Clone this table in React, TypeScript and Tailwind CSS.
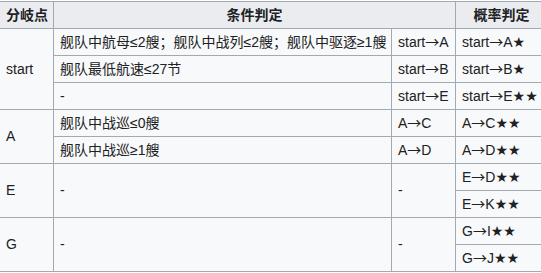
import React from 'react';

const cell = 'border border-[#a2a9b1] px-[6px] py-0 h-[27px] leading-[19px] text-left align-middle whitespace-nowrap';
const head = 'border border-[#a2a9b1] px-[6px] py-0 h-[27px] leading-[19px] bg-[#eaecf0] font-bold text-center whitespace-nowrap';

// arrow and star glyphs come from different fonts in the original page
function Arrow() {
  return <span style={{ fontFamily: '"Noto Sans CJK SC", sans-serif' }}>→</span>;
}

function Route({ from, to, stars = 0 }: { from: string; to: string; stars?: number }) {
  return (
    <>
      {from}
      <Arrow />
      {to}
      {stars > 0 && <span style={{ fontFamily: '"DejaVu Sans", sans-serif' }}>{'★'.repeat(stars)}</span>}
    </>
  );
}

export default function App() {
  return (
    <div className="overflow-hidden w-[541px] h-[273px] bg-white">
      <table
        className="border-collapse table-fixed w-[548px] bg-[#f8f9fa] text-[#202122] text-[14px] ml-[-1px] mt-[1px]"
        style={{ fontFamily: '"Liberation Sans", Arial, "Noto Sans CJK SC", "DejaVu Sans", sans-serif' }}
      >
        <colgroup>
          <col className="w-[54px]" />
          <col className="w-[338px]" />
          <col className="w-[64px]" />
          <col className="w-[92px]" />
        </colgroup>
        <thead>
          <tr>
            <th className={head}>分岐点</th>
            <th className={head} colSpan={2}>条件判定</th>
            <th className={head}>概率判定</th>
          </tr>
        </thead>
        <tbody>
          <tr>
            <td className={cell} rowSpan={3}>start</td>
            <td className={cell}>舰队中航母≤2艘；舰队中战列≤2艘；舰队中驱逐≥1艘</td>
            <td className={cell}><Route from="start" to="A" /></td>
            <td className={cell}><Route from="start" to="A" stars={1} /></td>
          </tr>
          <tr>
            <td className={cell}>舰队最低航速≤27节</td>
            <td className={cell}><Route from="start" to="B" /></td>
            <td className={cell}><Route from="start" to="B" stars={1} /></td>
          </tr>
          <tr>
            <td className={cell}>-</td>
            <td className={cell}><Route from="start" to="E" /></td>
            <td className={cell}><Route from="start" to="E" stars={2} /></td>
          </tr>
          <tr>
            <td className={cell} rowSpan={2}>A</td>
            <td className={cell}>舰队中战巡≤0艘</td>
            <td className={cell}><Route from="A" to="C" /></td>
            <td className={cell}><Route from="A" to="C" stars={2} /></td>
          </tr>
          <tr>
            <td className={cell}>舰队中战巡≥1艘</td>
            <td className={cell}><Route from="A" to="D" /></td>
            <td className={cell}><Route from="A" to="D" stars={2} /></td>
          </tr>
          <tr>
            <td className={cell} rowSpan={2}>E</td>
            <td className={cell} rowSpan={2}>-</td>
            <td className={cell} rowSpan={2}>-</td>
            <td className={cell}><Route from="E" to="D" stars={2} /></td>
          </tr>
          <tr>
            <td className={cell}><Route from="E" to="K" stars={2} /></td>
          </tr>
          <tr>
            <td className={cell} rowSpan={2}>G</td>
            <td className={cell} rowSpan={2}>-</td>
            <td className={cell} rowSpan={2}>-</td>
            <td className={cell}><Route from="G" to="I" stars={2} /></td>
          </tr>
          <tr>
            <td className={cell}><Route from="G" to="J" stars={2} /></td>
          </tr>
        </tbody>
      </table>
    </div>
  );
}
